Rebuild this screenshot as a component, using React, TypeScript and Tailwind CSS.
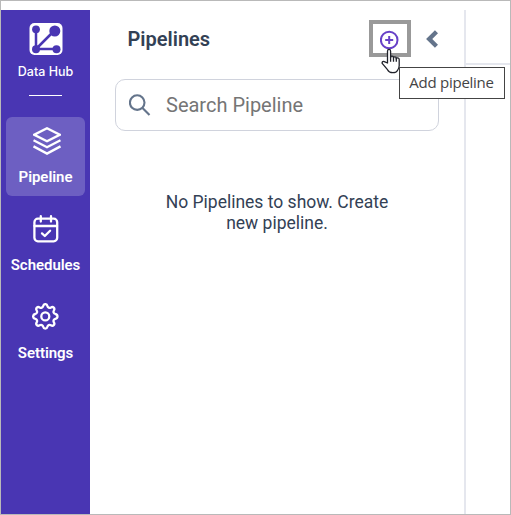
import type { ReactNode } from "react";

function LayersIcon() {
  return (
    <svg className="ml-[3px] block h-7 w-7" viewBox="0 0 28 28" fill="none" stroke="#fff" strokeWidth="2.4">
      <path d="M14 1.3 26.7 7.7 14 14.2 1.3 7.7Z" />
      <path d="M.5 13.2 14 20.2l13.5-7" />
      <path d="M.5 19.4 14 26.6l13.5-7.2" />
    </svg>
  );
}

function CalendarIcon() {
  return (
    <svg className="block h-7 w-[26px]" viewBox="0 0 26 28" fill="none" stroke="#fff" strokeWidth="2.3" strokeLinecap="round" strokeLinejoin="round">
      <rect x="1.4" y="3.7" width="22.8" height="22.6" rx="3.5" />
      <path d="M7.8 1.2v5.3M18 1.2v5.3M1.5 11h22.6M9 18.4l2.8 2.6 5.3-5.3" />
    </svg>
  );
}

function GearIcon() {
  return (
    <svg className="block h-7 w-7" viewBox="0 0 28 28" fill="none" stroke="#fff" strokeWidth="2.3" strokeLinejoin="round">
      <path
        transform="translate(-.7 -.2)"
        d="M11.9 3.2C12.5.7 15.5.7 16.1 3.2c.4 1.6 2.1 2.3 3.5 1.5 2.2-1.4 4.4.8 3 3-.9 1.4-.2 3.1 1.4 3.5 2.9.6 2.9 4.2 0 4.8-1.6.4-2.3 2.1-1.4 3.5 1.4 2.2-.8 4.4-3 3-1.4-.9-3.1-.2-3.5 1.5-.6 2.5-3.6 2.5-4.2 0-.4-1.7-2.1-2.4-3.5-1.5-2.2 1.4-4.4-.8-3-3 .9-1.4.2-3.1-1.4-3.5-2.9-.6-2.9-4.2 0-4.8 1.6-.4 2.3-2.1 1.4-3.5-1.4-2.2.8-4.4 3-3 1.4.8 3.1.1 3.5-1.5Z"
      />
      <circle cx="13.3" cy="13.4" r="4" />
    </svg>
  );
}

function NavItem({ icon, label, active = false }: { icon: ReactNode; label: string; active?: boolean }) {
  return (
    <button className={`flex h-[79px] w-[79px] flex-col items-center rounded-md pt-2.5 text-white ${active ? "bg-[#6d5fc2]" : ""}`}>
      {icon}
      <span className="mt-[13px] text-[15px] leading-[19px] font-semibold tracking-[-0.05px]">{label}</span>
    </button>
  );
}

function Sidebar() {
  return (
    <aside className="flex w-[89px] shrink-0 flex-col items-center bg-[#4936b3]">
      <svg className="mt-3 block h-[34px] w-[34px]" viewBox="0 0 34 34">
        <rect x=".5" y="1" width="33" height="32" rx="5" fill="#fff" />
        <g fill="#4936b3" stroke="#4936b3">
          <path d="M7 7v20h21M7 27 26 8" fill="none" strokeWidth="2.5" />
          <circle cx="7" cy="7.3" r="3.9" stroke="none" />
          <circle cx="25.8" cy="9" r="5.5" stroke="none" />
          <circle cx="7" cy="27.2" r="4" stroke="none" />
          <circle cx="27.5" cy="27.2" r="4" stroke="none" />
        </g>
      </svg>
      <span className="mt-[7px] font-[Inter] text-[12.5px] leading-[18px] font-medium text-white">Data Hub</span>
      <div className="mt-[14px] h-px w-[33px] bg-white" />
      <nav className="mt-[21px] flex flex-col gap-[9px]">
        <NavItem icon={<LayersIcon />} label="Pipeline" active />
        <NavItem icon={<CalendarIcon />} label="Schedules" />
        <NavItem icon={<GearIcon />} label="Settings" />
      </nav>
    </aside>
  );
}

export default function App() {
  return (
    <div className="relative flex h-[515px] w-[511px] overflow-hidden border border-[#b9b9b9] bg-white pt-[9px] font-[Roboto,sans-serif] text-[#334155]">
      <Sidebar />
      <main className="flex w-[376px] shrink-0 flex-col border-r-2 border-[#e5e7ee] pl-[25px]">
        <header className="flex h-[69px] items-start pt-2.5 pl-[12.5px]">
          <h1 className="pt-[7px] text-xl leading-6 font-semibold">Pipelines</h1>
          <button className="ml-auto flex h-[37px] w-[42px] items-center justify-center border-4 border-[#999]">
            <svg className="block h-5 w-5" viewBox="0 0 20 20" fill="none" stroke="#6741c7" strokeWidth="2">
              <circle cx="9.2" cy="11" r="8.3" />
              <path d="M5.2 11h8M9.2 7v8" />
            </svg>
          </button>
          <svg className="mt-2.5 mr-[26px] ml-[15px] block h-[18px] w-3" viewBox="0 0 12 18" fill="none" stroke="#64748b" strokeWidth="4.4">
            <path d="m10.5 1.7-7.3 7.3 7.3 7.3" />
          </svg>
        </header>
        <div className="flex h-[52px] w-[324px] items-center rounded-[10px] border border-[#d0d3dd] pl-[13px]">
          <svg className="block h-[22px] w-[22px]" viewBox="0 0 22 22" fill="none" stroke="#64748b" strokeWidth="2.1">
            <circle cx="8.2" cy="8.6" r="7.3" />
            <path d="m13.5 14 7 7" />
          </svg>
          <span className="ml-[15px] text-xl leading-6 text-[#757575]">Search Pipeline</span>
        </div>
        <p className="mt-[61px] w-[324px] text-center text-[17.5px] leading-[21px]">
          No Pipelines to show. Create
          <br />
          new pipeline.
        </p>
      </main>
      <section className="grow">
        <div className="h-[55px] border-b-2 border-[#e5e7ee]" />
      </section>
      <svg className="absolute top-[47px] left-[380px] h-[26px] w-5" viewBox="0 0 20 26" fill="#fff" stroke="#20222a" strokeWidth="1.3" strokeLinejoin="round">
        <path d="M6.5 15V3.2c0-2.4 3.1-2.4 3.1 0v6.3c0-1.8 2.9-1.8 2.9 0v.5c0-1.7 2.8-1.5 2.8.2v.7c.3-1.5 2.9-1.2 2.9.7v6.2c0 2.8-1 3.8-2 5-.7 1.5-1.6 1.9-4.4 1.9-3 0-4.2-.8-5.3-3L1.4 15.7c-1-2 1.2-2.9 2.5-1.8Z" />
        <path d="M9.6 9v4.8M12.5 9v4.8M15.3 10v3.8" fill="none" />
      </svg>
      <div role="tooltip" className="absolute top-[66px] left-[398px] flex h-8 w-[106px] items-center justify-center border border-[#444] bg-white pr-px pb-px font-['Open_Sans'] text-[15px] tracking-[-0.25px] whitespace-nowrap text-[#444]">
        Add pipeline
      </div>
    </div>
  );
}
